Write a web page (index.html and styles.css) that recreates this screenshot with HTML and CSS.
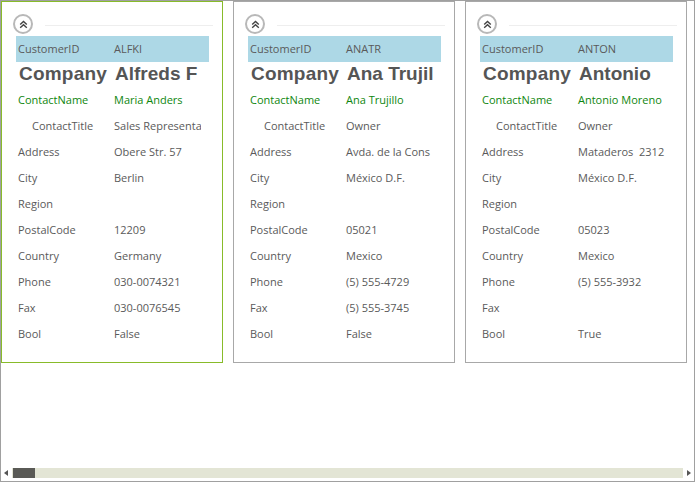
FILE: index.html
```html
<!DOCTYPE html>
<html>
<head>
<meta charset="utf-8">
<link rel="stylesheet" href="styles.css">
</head>
<body>
<div class="frame">
  <div class="cards">
    <div class="card active">
      <div class="card-head">
        <span class="toggle"><svg width="9" height="9" viewBox="0 0 9 9"><path d="M1.2 4.6 L4.5 1.5 L7.8 4.6 M1.2 7.8 L4.5 4.7 L7.8 7.8" fill="none" stroke="#444" stroke-width="1.4"/></svg></span>
        <span class="rule"></span>
      </div>
      <div class="rows">
        <div class="row key"><span class="k">CustomerID</span><span class="v">ALFKI</span></div>
        <div class="row title"><span class="k">Company</span><span class="v">Alfreds F</span></div>
        <div class="row green"><span class="k">ContactName</span><span class="v">Maria Anders</span></div>
        <div class="row"><span class="k indent">ContactTitle</span><span class="v">Sales Representa</span></div>
        <div class="row"><span class="k">Address</span><span class="v">Obere Str. 57</span></div>
        <div class="row"><span class="k">City</span><span class="v">Berlin</span></div>
        <div class="row"><span class="k">Region</span><span class="v"></span></div>
        <div class="row"><span class="k">PostalCode</span><span class="v">12209</span></div>
        <div class="row"><span class="k">Country</span><span class="v">Germany</span></div>
        <div class="row"><span class="k">Phone</span><span class="v">030-0074321</span></div>
        <div class="row"><span class="k">Fax</span><span class="v">030-0076545</span></div>
        <div class="row"><span class="k">Bool</span><span class="v">False</span></div>
      </div>
    </div>
    <div class="card">
      <div class="card-head">
        <span class="toggle"><svg width="9" height="9" viewBox="0 0 9 9"><path d="M1.2 4.6 L4.5 1.5 L7.8 4.6 M1.2 7.8 L4.5 4.7 L7.8 7.8" fill="none" stroke="#444" stroke-width="1.4"/></svg></span>
        <span class="rule"></span>
      </div>
      <div class="rows">
        <div class="row key"><span class="k">CustomerID</span><span class="v">ANATR</span></div>
        <div class="row title"><span class="k">Company</span><span class="v">Ana Trujil</span></div>
        <div class="row green"><span class="k">ContactName</span><span class="v">Ana Trujillo</span></div>
        <div class="row"><span class="k indent">ContactTitle</span><span class="v">Owner</span></div>
        <div class="row"><span class="k">Address</span><span class="v">Avda. de la Cons</span></div>
        <div class="row"><span class="k">City</span><span class="v">México D.F.</span></div>
        <div class="row"><span class="k">Region</span><span class="v"></span></div>
        <div class="row"><span class="k">PostalCode</span><span class="v">05021</span></div>
        <div class="row"><span class="k">Country</span><span class="v">Mexico</span></div>
        <div class="row"><span class="k">Phone</span><span class="v">(5) 555-4729</span></div>
        <div class="row"><span class="k">Fax</span><span class="v">(5) 555-3745</span></div>
        <div class="row"><span class="k">Bool</span><span class="v">False</span></div>
      </div>
    </div>
    <div class="card">
      <div class="card-head">
        <span class="toggle"><svg width="9" height="9" viewBox="0 0 9 9"><path d="M1.2 4.6 L4.5 1.5 L7.8 4.6 M1.2 7.8 L4.5 4.7 L7.8 7.8" fill="none" stroke="#444" stroke-width="1.4"/></svg></span>
        <span class="rule"></span>
      </div>
      <div class="rows">
        <div class="row key"><span class="k">CustomerID</span><span class="v">ANTON</span></div>
        <div class="row title"><span class="k">Company</span><span class="v">Antonio</span></div>
        <div class="row green"><span class="k">ContactName</span><span class="v">Antonio Moreno</span></div>
        <div class="row"><span class="k indent">ContactTitle</span><span class="v">Owner</span></div>
        <div class="row"><span class="k">Address</span><span class="v">Mataderos&nbsp; 2312</span></div>
        <div class="row"><span class="k">City</span><span class="v">México D.F.</span></div>
        <div class="row"><span class="k">Region</span><span class="v"></span></div>
        <div class="row"><span class="k">PostalCode</span><span class="v">05023</span></div>
        <div class="row"><span class="k">Country</span><span class="v">Mexico</span></div>
        <div class="row"><span class="k">Phone</span><span class="v">(5) 555-3932</span></div>
        <div class="row"><span class="k">Fax</span><span class="v"></span></div>
        <div class="row"><span class="k">Bool</span><span class="v">True</span></div>
      </div>
    </div>
  </div>
  <div class="scrollbar">
    <span class="arrow left"></span>
    <div class="track"><div class="thumb"></div></div>
    <span class="arrow right"></span>
  </div>
</div>
</body>
</html>
```

FILE: styles.css
```css
* { box-sizing: border-box; }
html, body { margin: 0; padding: 0; background: #fff; }
.frame {
  width: 695px;
  height: 482px;
  border: 1px solid #a0a0a0;
  display: flex;
  flex-direction: column;
  justify-content: space-between;
  font-family: "Open Sans", "Noto Sans", sans-serif;
  font-size: 11px;
  color: #5a5a5a;
  overflow: hidden;
}
.cards {
  display: flex;
  gap: 10px;
}
.card {
  flex: 0 0 222px;
  width: 222px;
  height: 362px;
  border: 1px solid #a8a8a8;
  background: #fff;
}
.card.active { border-color: #88bb2a; }
.card-head {
  height: 34px;
  padding: 10px 9px 0 11px;
  display: flex;
  align-items: center;
}
.toggle {
  width: 20px;
  height: 20px;
  border: 2px solid #b8b8b8;
  border-radius: 50%;
  display: flex;
  align-items: center;
  justify-content: center;
  flex: none;
}
.toggle svg { display: block; }
.rule {
  flex: 1;
  height: 1px;
  margin-left: 12px;
  margin-top: 2px;
  background: #eeeeee;
}
.rows { padding: 0 13px 0 14px; }
.row {
  display: grid;
  grid-template-columns: 96px 89px;
  height: 26px;
  align-items: center;
  white-space: nowrap;
}
.row .k, .row .v { padding-left: 2px; padding-bottom: 1px; overflow: hidden; }
.row .k.indent { padding-left: 16px; }
.row.key { background: #add8e6; }
.row.title {
  height: 25px;
  font-family: "Liberation Sans", Arial, sans-serif;
  font-weight: bold;
  font-size: 19px;
  color: #555555;
}
.row.title .k, .row.title .v { padding-left: 3px; }
.row.title .k { letter-spacing: 0.2px; }
.row.green { color: #0e860e; }
.scrollbar {
  height: 10px;
  margin-bottom: 3px;
  display: flex;
  align-items: center;
}
.arrow {
  width: 11px;
  height: 10px;
  position: relative;
  flex: none;
}
.arrow.left::before {
  content: "";
  position: absolute;
  left: 3px;
  top: 2px;
  border-top: 3px solid transparent;
  border-bottom: 3px solid transparent;
  border-right: 4px solid #555;
}
.arrow.right::before {
  content: "";
  position: absolute;
  left: 4px;
  top: 2px;
  border-top: 3px solid transparent;
  border-bottom: 3px solid transparent;
  border-left: 4px solid #555;
}
.track {
  flex: 1;
  height: 10px;
  background: #e3e5d5;
}
.thumb {
  width: 22px;
  height: 10px;
  margin-left: 1px;
  background: #5a5a56;
}
```
